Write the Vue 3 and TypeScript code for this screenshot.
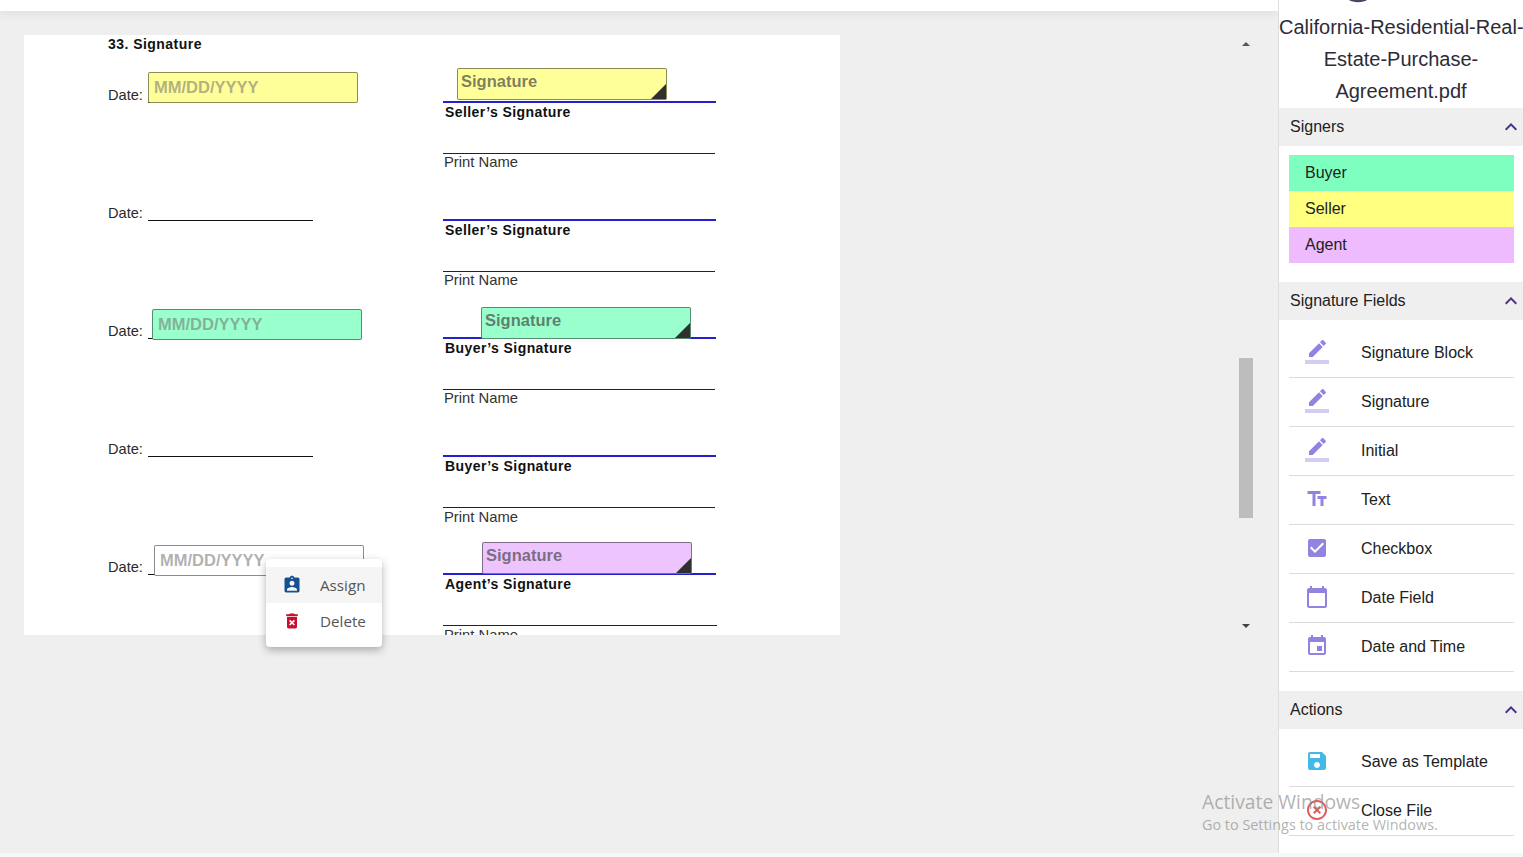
<script setup lang="ts">
interface Row { signer: string; printClass?: string }
interface Field { kind: string; text: string; left: number; top: number; corner: boolean }
interface Item { label: string; icon: string; duo?: string; color: string }

const rows: Row[] = [
  { signer: "Seller’s Signature" },
  { signer: "Seller’s Signature" },
  { signer: "Buyer’s Signature" },
  { signer: "Buyer’s Signature", printClass: "low" },
  { signer: "Agent’s Signature", printClass: "wide" },
]

const fields: Field[] = [
  { kind: "yellow", text: "MM/DD/YYYY", left: 124, top: 37, corner: false },
  { kind: "yellow", text: "Signature", left: 433, top: 33, corner: true },
  { kind: "green", text: "MM/DD/YYYY", left: 128, top: 274, corner: false },
  { kind: "green", text: "Signature", left: 457, top: 272, corner: true },
  { kind: "blank", text: "MM/DD/YYYY", left: 130, top: 510, corner: false },
  { kind: "purple", text: "Signature", left: 458, top: 507, corner: true },
]

const titleLines = ["California-Residential-Real-", "Estate-Purchase-", "Agreement.pdf"]

const signers = [
  { name: "Buyer", cls: "buyer" },
  { name: "Seller", cls: "seller" },
  { name: "Agent", cls: "agent" },
]

const pen = "M17.75 7L14 3.25l-10 10V17h3.75l10-10zm2.96-2.96c.39-.39.39-1.02 0-1.41L18.37.29c-.39-.39-1.02-.39-1.41 0L15 2.25 18.75 6l1.96-1.96z"
const penBar = "M0 20h24v4H0z"
const purple = "#9283e0"

const fieldItems: Item[] = [
  { label: "Signature Block", icon: pen, duo: penBar, color: purple },
  { label: "Signature", icon: pen, duo: penBar, color: purple },
  { label: "Initial", icon: pen, duo: penBar, color: purple },
  { label: "Text", icon: "M2.5 4v3h5v12h3V7h5V4h-13zm19 5h-9v3h3v7h3v-7h3V9z", color: purple },
  { label: "Checkbox", icon: "M19 3H5c-1.11 0-2 .9-2 2v14c0 1.1.89 2 2 2h14c1.11 0 2-.9 2-2V5c0-1.1-.89-2-2-2zm-9 14l-5-5 1.41-1.41L10 14.17l7.59-7.59L19 8l-9 9z", color: purple },
  { label: "Date Field", icon: "M20 3h-1V1h-2v2H7V1H5v2H4c-1.1 0-2 .9-2 2v16c0 1.1.9 2 2 2h16c1.1 0 2-.9 2-2V5c0-1.1-.9-2-2-2zm0 18H4V8h16v13z", color: purple },
  { label: "Date and Time", icon: "M17 12h-5v5h5v-5zM16 1v2H8V1H6v2H5c-1.11 0-1.99.9-1.99 2L3 19c0 1.1.89 2 2 2h14c1.1 0 2-.9 2-2V5c0-1.1-.9-2-2-2h-1V1h-2zm3 18H5V8h14v11z", color: purple },
]

const actionItems: Item[] = [
  { label: "Save as Template", icon: "M17 3H5c-1.11 0-2 .9-2 2v14c0 1.1.89 2 2 2h14c1.1 0 2-.9 2-2V7l-4-4zm-5 16c-1.66 0-3-1.34-3-3s1.34-3 3-3 3 1.34 3 3-1.34 3-3 3zm3-10H5V5h10v4z", color: "#43b9e8" },
  { label: "Close File", icon: "M14.59 8L12 10.59 9.41 8 8 9.41 10.59 12 8 14.59 9.41 16 12 13.41 14.59 16 16 14.59 13.41 12 16 9.41 14.59 8zM12 2C6.47 2 2 6.47 2 12s4.47 10 10 10 10-4.47 10-10S17.53 2 12 2zm0 18c-4.41 0-8-3.59-8-8s3.59-8 8-8 8 3.59 8 8-3.59 8-8 8z", color: "#e25c5c" },
]

const chevron = "M7.41 15.41L12 10.83l4.59 4.58L18 14l-6-6-6 6z"
</script>

<template>
  <div class="app">
    <div class="body">
      <div class="left">
        <div class="topbar"></div>
        <div class="viewer">
          <div class="page">
            <div class="heading">33. Signature</div>
            <div v-for="(row, i) in rows" :key="i" class="block">
              <div class="date">
                <span class="date-text">Date:</span>
                <span class="date-line"></span>
              </div>
              <div class="sign">
                <div class="sign-line"></div>
                <div class="sign-label">{{ row.signer }}</div>
                <div class="print-line" :class="row.printClass"></div>
                <div class="print-label" :class="row.printClass">Print Name</div>
              </div>
            </div>
            <div
              v-for="(f, i) in fields"
              :key="'f' + i"
              class="field"
              :class="[f.kind, { sig: f.corner }]"
              :style="{ left: f.left + 'px', top: f.top + 'px' }"
            >
              {{ f.text }}
              <i v-if="f.corner" class="corner"></i>
            </div>
          </div>
          <div class="scroll">
            <i class="arrow up"></i>
            <div class="thumb"></div>
            <i class="arrow down"></i>
          </div>
          <div class="menu">
            <div class="menu-item active">
              <svg viewBox="0 0 24 24" width="20" height="20" fill="#16508f"><path d="M19 3h-4.18C14.4 1.84 13.3 1 12 1c-1.3 0-2.4.84-2.82 2H5c-1.1 0-2 .9-2 2v14c0 1.1.9 2 2 2h14c1.1 0 2-.9 2-2V5c0-1.1-.9-2-2-2zm-7 0c.55 0 1 .45 1 1s-.45 1-1 1-1-.45-1-1 .45-1 1-1zm0 4c1.66 0 3 1.34 3 3s-1.34 3-3 3-3-1.34-3-3 1.34-3 3-3zm6 12H6v-1.4c0-2 4-3.1 6-3.1s6 1.1 6 3.1V19z"/></svg>
              <span>Assign</span>
            </div>
            <div class="menu-item">
              <svg viewBox="0 0 24 24" width="20" height="20" fill="#c8102e"><path d="M6 19c0 1.1.9 2 2 2h8c1.1 0 2-.9 2-2V7H6v12zm2.46-7.12l1.41-1.41L12 12.59l2.12-2.12 1.41 1.41L13.41 14l2.12 2.12-1.41 1.41L12 15.41l-2.12 2.12-1.41-1.41L10.59 14l-2.13-2.12zM15.5 4l-1-1h-5l-1 1H5v2h14V4z"/></svg>
              <span>Delete</span>
            </div>
          </div>
        </div>
      </div>

      <aside class="side">
        <div class="logo">
          <svg width="18" height="3" viewBox="0 0 18 3"><path d="M0 0h18c-2 1.4-5 2.2-9 2.2S2 1.4 0 0z" fill="#4b4660"/></svg>
        </div>
        <h1 class="title">
          <span v-for="line in titleLines" :key="line" class="title-line">{{ line }}</span>
        </h1>

        <div class="sec-head">
          <span>Signers</span>
          <svg viewBox="0 0 24 24" width="24" height="24"><path :d="chevron" /></svg>
        </div>
        <div class="signers">
          <div v-for="s in signers" :key="s.name" class="signer" :class="s.cls">{{ s.name }}</div>
        </div>

        <div class="sec-head">
          <span>Signature Fields</span>
          <svg viewBox="0 0 24 24" width="24" height="24"><path :d="chevron" /></svg>
        </div>
        <ul class="list">
          <li v-for="it in fieldItems" :key="it.label" class="item">
            <svg viewBox="0 0 24 24" width="24" height="24" :fill="it.color">
              <path :d="it.icon" />
              <path v-if="it.duo" :d="it.duo" fill-opacity=".4" />
            </svg>
            <span>{{ it.label }}</span>
          </li>
        </ul>

        <div class="sec-head">
          <span>Actions</span>
          <svg viewBox="0 0 24 24" width="24" height="24"><path :d="chevron" /></svg>
        </div>
        <ul class="list actions">
          <li v-for="it in actionItems" :key="it.label" class="item">
            <svg viewBox="0 0 24 24" width="24" height="24" :fill="it.color"><path :d="it.icon" /></svg>
            <span>{{ it.label }}</span>
          </li>
        </ul>
      </aside>
    </div>
    <div class="strip"></div>

    <div class="watermark">
      <div class="wm-a">Activate Windows</div>
      <div class="wm-b">Go to Settings to activate Windows.</div>
    </div>
  </div>
</template>

<style scoped>
.app {
  position: relative;
  width: 1523px;
  height: 857px;
  overflow: hidden;
  display: flex;
  flex-direction: column;
  background: #fff;
  font-family: "Liberation Sans", Arial, sans-serif;
  color: #212121;
}
.body {
  display: flex;
  height: 853px;
}
.left {
  width: 1278px;
  display: flex;
  flex-direction: column;
  background: #efefef;
}
.topbar {
  height: 11px;
  background: #fff;
  box-shadow: 0 3px 10px rgba(40, 50, 80, 0.08);
}
.viewer {
  position: relative;
  flex: 1;
  display: flex;
  align-items: flex-start;
  padding: 24px 25px 0 24px;
}
.page {
  position: relative;
  width: 816px;
  height: 600px;
  overflow: hidden;
  background: #fff;
  flex: none;
  color: #1a1a1a;
}
.heading {
  height: 46px;
  padding: 1px 0 0 84px;
  font-size: 14px;
  font-weight: 700;
  line-height: 17px;
  letter-spacing: 0.46px;
  color: #111;
}
.block {
  height: 118px;
  display: grid;
  grid-template-columns: 335px 1fr;
  padding-left: 84px;
}
.date {
  display: flex;
  align-items: flex-end;
  height: 21px;
  font-size: 14.6px;
  line-height: 17px;
  color: #2a2a2a;
}
.date-text {
  margin-bottom: -1px;
}
.date-line {
  width: 165px;
  height: 0;
  margin: 0 0 0 5px;
  border-bottom: 1px solid #111;
}
.sign {
  display: flex;
  flex-direction: column;
  padding-top: 19px;
}
.sign-line {
  width: 273px;
  height: 2px;
  background: #2222cc;
}
.sign-label {
  margin: 1px 0 0 2px;
  font-size: 14px;
  font-weight: 700;
  line-height: 17px;
  letter-spacing: 0.42px;
  color: #111;
}
.print-line {
  width: 272px;
  height: 0;
  margin-top: 32px;
  border-bottom: 1px solid #222;
}
.print-line.wide {
  width: 274px;
}
.print-label {
  margin: 0 0 0 1px;
  font-size: 14.8px;
  line-height: 17px;
  color: #333;
}
.print-label.low {
  margin-top: 1px;
}
.print-label.wide {
  margin-top: 1px;
}
.field {
  position: absolute;
  box-sizing: border-box;
  width: 210px;
  height: 31px;
  padding: 4px 0 0 5px;
  border: 1px solid rgba(0, 0, 0, 0.45);
  border-radius: 2px;
  font-size: 16.5px;
  line-height: 20px;
  font-weight: 700;
  color: rgba(110, 110, 110, 0.55);
  background: #fff;
}
.field.sig {
  height: 32px;
  padding: 2px 0 0 3px;
  color: rgba(70, 70, 70, 0.7);
}
.yellow { background: #ffff99; }
.green { background: #99ffcc; }
.purple { background: #eec4ff; }
.corner {
  position: absolute;
  right: 0;
  bottom: 0;
  width: 15px;
  height: 15px;
  background: #2f2f2f;
  clip-path: polygon(100% 0, 100% 100%, 0 100%);
}
.scroll {
  margin-left: 399px;
  width: 14px;
  height: 600px;
  display: flex;
  flex-direction: column;
  align-items: center;
  flex: none;
}
.arrow {
  width: 0;
  height: 0;
  border-left: 4px solid transparent;
  border-right: 4px solid transparent;
}
.arrow.up {
  margin-top: 7px;
  border-bottom: 4px solid #555;
}
.thumb {
  margin-top: 312px;
  width: 14px;
  height: 160px;
  background: #bdbdbd;
  flex: none;
}
.arrow.down {
  margin-top: 106px;
  border-top: 4px solid #444;
}
.menu {
  position: absolute;
  left: 266px;
  top: 548px;
  width: 116px;
  box-sizing: border-box;
  padding: 8px 0;
  border-radius: 4px;
  background: #fff;
  box-shadow: 0 3px 8px rgba(0, 0, 0, 0.3);
  font-family: "Open Sans", sans-serif;
  font-size: 15.2px;
  color: #555;
}
.menu-item {
  height: 36px;
  display: flex;
  align-items: center;
  padding-left: 16px;
  gap: 18px;
}
.menu-item svg {
  flex: none;
}
.menu-item.active {
  background: #f5f5f5;
}
.side {
  width: 245px;
  box-sizing: border-box;
  border-left: 1px solid #dedede;
  background: #fff;
  display: flex;
  flex-direction: column;
  height: 853px;
}
.logo {
  height: 11px;
  padding-left: 70px;
}
.logo svg {
  display: block;
}
.title {
  margin: 0 0 1px;
  font-size: 20px;
  font-weight: 400;
  line-height: 32px;
  text-align: center;
  color: #2c2c38;
}
.title-line {
  display: block;
  white-space: nowrap;
}
.sec-head {
  flex: none;
  height: 38px;
  display: flex;
  align-items: center;
  justify-content: space-between;
  padding: 0 0 0 11px;
  background: #efefef;
  font-size: 16px;
  color: #212121;
}
.sec-head svg {
  fill: #4a2f85;
}
.signers {
  margin: 9px 9px 19px 10px;
}
.signer {
  height: 36px;
  line-height: 36px;
  padding-left: 16px;
  font-size: 16px;
  color: #212121;
}
.buyer { background: #7fffbf; }
.seller { background: #ffff7f; }
.agent { background: #eebbff; }
.list {
  list-style: none;
  margin: 9px 9px 19px 10px;
  padding: 0;
}
.list.actions {
  margin-bottom: 0;
}
.item {
  box-sizing: border-box;
  height: 49px;
  display: flex;
  align-items: center;
  gap: 32px;
  padding-left: 16px;
  border-bottom: 1px solid #dcdcdc;
  font-size: 16px;
  color: #212121;
}
.item svg {
  flex: none;
  margin-bottom: 2px;
}
.strip {
  height: 4px;
  background: #f7f7f7;
}
.watermark {
  position: absolute;
  left: 1202px;
  top: 789px;
  font-family: "Open Sans", sans-serif;
  color: rgba(130, 130, 130, 0.62);
  pointer-events: none;
  white-space: nowrap;
}
.wm-a {
  font-size: 19.3px;
  line-height: 26px;
}
.wm-b {
  font-size: 14.4px;
  line-height: 19px;
}
</style>
